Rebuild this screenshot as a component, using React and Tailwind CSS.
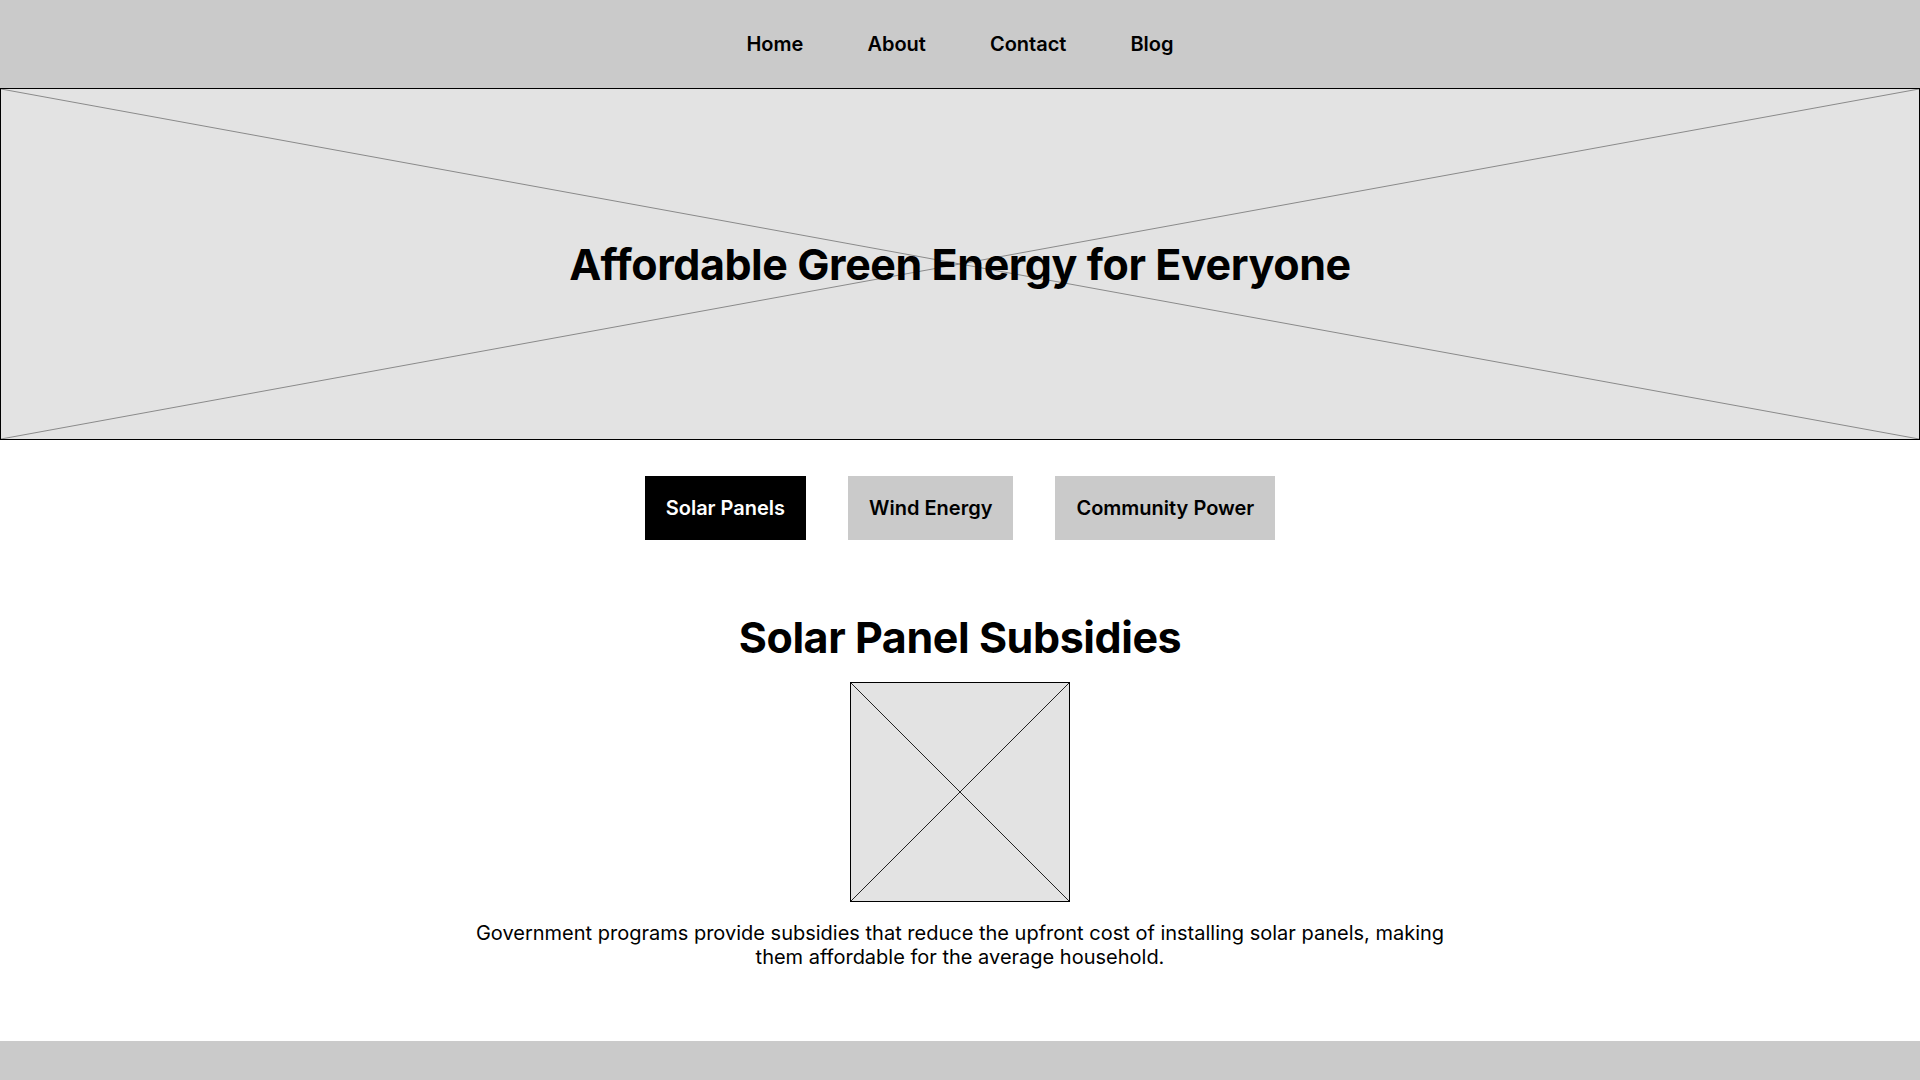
import React from "react";

function Placeholder({ stroke, className, strokeWidth = 1 }) {
  return (
    <svg className={className} preserveAspectRatio="none" viewBox="0 0 100 100">
      <line x1="0" y1="0" x2="100" y2="100" stroke={stroke} strokeWidth={strokeWidth} vectorEffect="non-scaling-stroke" />
      <line x1="100" y1="0" x2="0" y2="100" stroke={stroke} strokeWidth={strokeWidth} vectorEffect="non-scaling-stroke" />
    </svg>
  );
}

export default function App() {
  return (
    <div className="min-h-screen bg-white text-black" style={{ fontFamily: "Inter, 'Noto Sans', sans-serif" }}>
      <nav className="h-[88px] bg-[#cacaca] flex items-center justify-center gap-16">
        {["Home", "About", "Contact", "Blog"].map((t) => (
          <a key={t} className="text-[20px] font-semibold leading-none">{t}</a>
        ))}
      </nav>
      <header className="relative h-[352px] bg-[#e3e3e3] border border-black flex items-center justify-center">
        <Placeholder stroke="#8a8a8a" className="absolute inset-0 w-full h-full" />
        <h1 className="relative text-[43px] font-bold leading-none tracking-[-0.01em]">Affordable Green Energy for Everyone</h1>
      </header>
      <div className="flex justify-center gap-[42px] pt-9">
        <button className="h-16 px-[21px] bg-black text-white text-[20px] font-semibold">Solar Panels</button>
        <button className="h-16 px-[21px] bg-[#cacaca] text-[20px] font-semibold">Wind Energy</button>
        <button className="h-16 px-[21px] bg-[#cacaca] text-[20px] font-semibold">Community Power</button>
      </div>
      <section className="flex flex-col items-center pt-[76px] pb-[72px]">
        <h2 className="text-[43px] font-bold leading-none tracking-[-0.01em]">Solar Panel Subsidies</h2>
        <div className="relative w-[220px] h-[220px] mt-[23px] bg-[#e3e3e3] border border-black">
          <Placeholder stroke="#222" className="absolute inset-0 w-full h-full" />
        </div>
        <p className="mt-[19px] max-w-[1000px] text-center text-[20px] leading-[24px]">
          Government programs provide subsidies that reduce the upfront cost of installing solar panels, making them affordable for the average household.
        </p>
      </section>
      <footer className="h-[80px] bg-[#cacaca]"></footer>
    </div>
  );
}
